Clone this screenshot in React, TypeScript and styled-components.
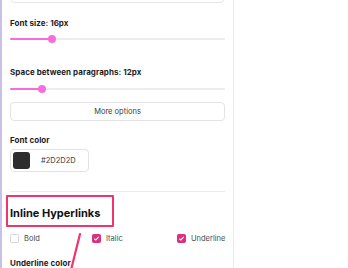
import React from "react";
import styled, { createGlobalStyle } from "styled-components";

const Global = createGlobalStyle`
  html, body { margin: 0; padding: 0; background: #ffffff; }
  body { font-family: "Inter", "Liberation Sans", Arial, sans-serif; color: #1f1f1f; overflow: hidden; }
`;

const Page = styled.div`
  position: relative;
  width: 348px;
  height: 268px;
  overflow: hidden;
  display: flex;
  background: #ffffff;
`;

const Accent = styled.div`
  width: 2px;
  flex: none;
  background: #c9c1e8;
`;

const Panel = styled.div`
  width: 215px;
  flex: none;
  padding: 0 8px;
  border-right: 1px solid #ececf0;
  display: flex;
  flex-direction: column;
`;

const TopInput = styled.div`
  height: 8px;
  margin-top: -7px;
  border: 1px solid #e4e4e8;
  border-radius: 5px;
`;

const Label = styled.div<{ $mt: number }>`
  margin-top: ${(p) => p.$mt}px;
  font-size: 8px;
  font-weight: 700;
  line-height: 10px;
  color: #1d1d1f;
  letter-spacing: 0.05px;
`;

const Track = styled.div<{ $mt: number }>`
  position: relative;
  margin-top: ${(p) => p.$mt}px;
  height: 2px;
  background: #ececec;
  border-radius: 1px;
`;

const Fill = styled.div`
  position: absolute;
  left: 0;
  top: 0;
  height: 2px;
  background: #f66de0;
  border-radius: 1px;
`;

const Thumb = styled.div`
  position: absolute;
  top: -3px;
  width: 8px;
  height: 8px;
  margin-left: -4px;
  border-radius: 50%;
  background: #f66de0;
`;

const Slider: React.FC<{ pct: number; mt: number }> = ({ pct, mt }) => (
  <Track $mt={mt}>
    <Fill style={{ width: `${pct}%` }} />
    <Thumb style={{ left: `${pct}%` }} />
  </Track>
);

const Button = styled.div`
  margin-top: 12px;
  height: 17px;
  border: 1px solid #e3e3e7;
  border-radius: 4px;
  display: flex;
  align-items: center;
  justify-content: center;
  font-size: 7.5px;
  color: #3a3a3c;
`;

const ColorField = styled.div`
  margin-top: 4px;
  width: 79px;
  height: 23px;
  border: 1px solid #e3e3e7;
  border-radius: 4px;
  display: flex;
  align-items: center;
  padding: 0 2px;
  box-sizing: border-box;
  gap: 11px;
`;

const Swatch = styled.div`
  width: 17px;
  height: 17px;
  border-radius: 3px;
  background: #2d2d2d;
`;

const ColorText = styled.span`
  font-size: 7.5px;
  color: #3a3a3c;
`;

const Divider = styled.div`
  margin-top: 19px;
  height: 1px;
  background: #ececf0;
`;

const Heading = styled.div`
  margin-top: 14px;
  font-size: 11px;
  font-weight: 700;
  line-height: 14px;
  color: #111;
`;

const Checks = styled.div`
  margin-top: 14px;
  display: grid;
  grid-template-columns: 82px 85px 1fr;
  align-items: center;
`;

const CheckItem = styled.div`
  display: flex;
  align-items: center;
  gap: 5px;
  font-size: 7.5px;
  color: #4a4a4d;
  white-space: nowrap;
`;

const Box = styled.div<{ $on?: boolean }>`
  width: 9px;
  height: 9px;
  box-sizing: border-box;
  border-radius: 1.5px;
  border: 1px solid ${(p) => (p.$on ? "#d8317e" : "#d6d6da")};
  background: ${(p) => (p.$on ? "#d8317e" : "#fff")};
  display: flex;
  align-items: center;
  justify-content: center;
`;

const Check: React.FC<{ on?: boolean; label: string }> = ({ on, label }) => (
  <CheckItem>
    <Box $on={on}>
      {on && (
        <svg width="7" height="7" viewBox="0 0 8 8">
          <path d="M1.5 4.3 L3.2 5.8 L6.5 2.2" stroke="#fff" strokeWidth="1.3" fill="none" />
        </svg>
      )}
    </Box>
    {label}
  </CheckItem>
);

const Highlight = styled.div`
  position: absolute;
  left: 6px;
  top: 195px;
  width: 108px;
  height: 32px;
  box-sizing: border-box;
  border: 2px solid #f0346e;
  border-radius: 1px;
  pointer-events: none;
`;

const Pointer = styled.svg`
  position: absolute;
  left: 0;
  top: 0;
  pointer-events: none;
`;

export default function App() {
  return (
    <Page>
      <Global />
      <Accent />
      <Panel>
        <TopInput />
        <Label $mt={15}>Font size: 16px</Label>
        <Slider pct={19.5} mt={10} />
        <Label $mt={27}>Space between paragraphs: 12px</Label>
        <Slider pct={15} mt={11} />
        <Button>More options</Button>
        <Label $mt={14}>Font color</Label>
        <ColorField>
          <Swatch />
          <ColorText>#2D2D2D</ColorText>
        </ColorField>
        <Divider />
        <Heading>Inline Hyperlinks</Heading>
        <Checks>
          <Check label="Bold" />
          <Check on label="Italic" />
          <Check on label="Underline" />
        </Checks>
        <Label $mt={15}>Underline color</Label>
      </Panel>
      <Highlight />
      <Pointer width="348" height="268">
        <path d="M80 234 L71 270" stroke="#f0346e" strokeWidth="2.2" strokeLinecap="round" fill="none" />
      </Pointer>
    </Page>
  );
}
